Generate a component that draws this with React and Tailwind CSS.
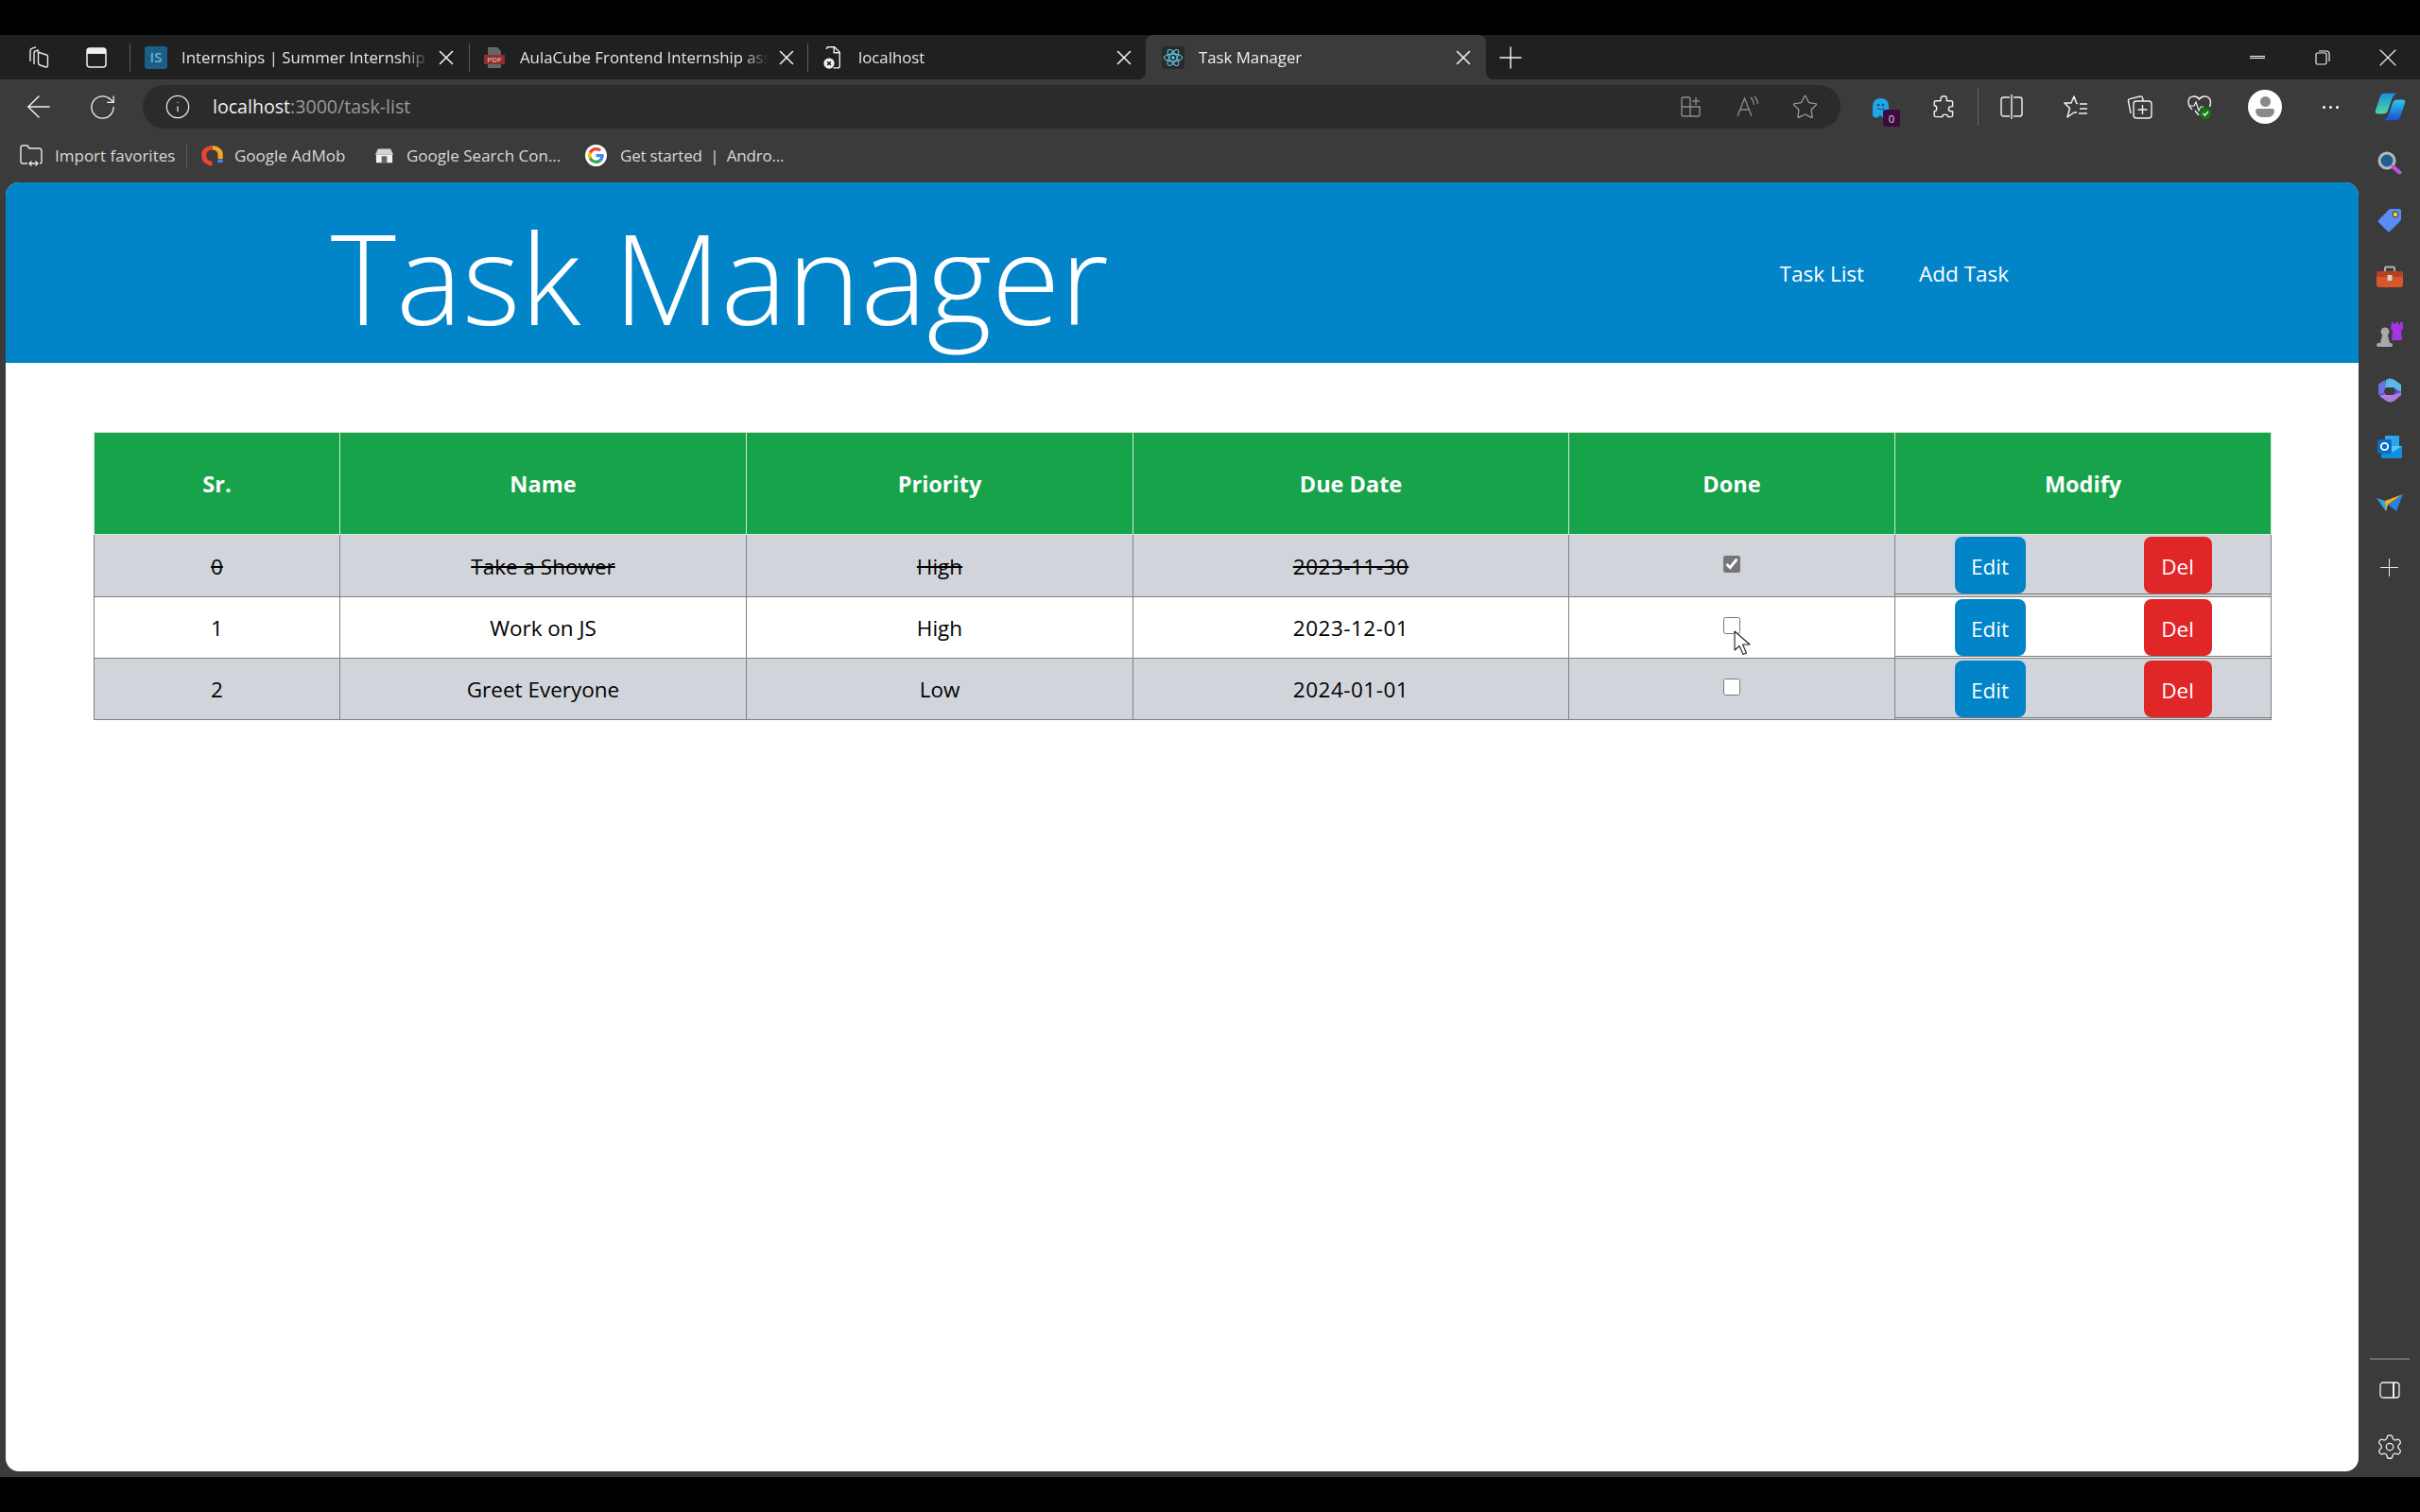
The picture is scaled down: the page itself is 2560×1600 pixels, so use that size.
import { ArrowLeft, RotateCw, Info, X, Plus, Star, Settings } from 'lucide-react'

const tasks = [
  { id: 0, name: 'Take a Shower', priority: 'High', due: '2023-11-30', done: true },
  { id: 1, name: 'Work on JS', priority: 'High', due: '2023-12-01', done: false },
  { id: 2, name: 'Greet Everyone', priority: 'Low', due: '2024-01-01', done: false },
]

function Slot({ className, children }) {
  return <div className={`flex shrink-0 items-center justify-center ${className}`}>{children}</div>
}

function TabText({ children, className = '' }) {
  return (
    <div className={`overflow-hidden whitespace-nowrap text-[16.800px] leading-6 text-[#e6e6e6] [mask-image:linear-gradient(to_right,black_90%,transparent)] ${className}`}>
      {children}
    </div>
  )
}

function TabClose({ className }) {
  return (
    <Slot className={className}>
      <X size={26} strokeWidth={1.400} color="#f2f2f2" />
    </Slot>
  )
}

function Divider() {
  return <div className="h-[30px] w-px shrink-0 bg-[#5a5a5a]" />
}

function WorkspacesIcon() {
  return (
    <svg width="25" height="24" viewBox="0 0 25 24" fill="none" stroke="#e8e8e8" strokeWidth="1.400" strokeLinejoin="round">
      <path d="M13 6l9 3q1.500.5 1.500 2v9q0 2.500-2 2l-6-2q-2-.7-2-2.500V7.500q0-1.800-.5-1.500z" />
      <path d="M9 19V7q0-2 2-2.300l3-.7" />
      <path d="M5 16V5q0-2.300 2-2.800L11 1" />
    </svg>
  )
}

function TabActionsIcon() {
  return (
    <svg width="22" height="22" viewBox="0 0 22 22" fill="none">
      <rect x="1" y="1" width="20" height="20" rx="3" stroke="#f0f0f0" strokeWidth="1.500" />
      <path d="M1 4q0-3 3-3h14q3 0 3 3v3H1z" fill="#f0f0f0" />
    </svg>
  )
}

function PdfIcon() {
  return (
    <svg width="22" height="22" viewBox="0 0 22 22">
      <path d="M4 0h10l4 4v18H4z" fill="#666" />
      <rect x="0" y="8" width="22" height="10" fill="#8f2f30" />
      <text x="11" y="16" textAnchor="middle" fontSize="7.500" fontWeight="700" fill="#d9a0a0" fontFamily="Liberation Sans, sans-serif">PDF</text>
    </svg>
  )
}

function FileErrorIcon() {
  return (
    <svg width="21" height="26" viewBox="0 0 24 30" fill="none">
      <path d="M5 4.500q0-2.500 2.500-2.500h7l6.500 6.500V25q0 2.500-2.500 2.500H13" stroke="#eee" strokeWidth="1.600" />
      <path d="M14 2v7h7" stroke="#eee" strokeWidth="1.600" />
      <circle cx="8" cy="22" r="6.500" fill="#f0f0f0" />
      <path d="M5.800 19.800l4.400 4.400M10.200 19.800l-4.400 4.400" stroke="#111" strokeWidth="1.600" />
    </svg>
  )
}

function ReactIcon() {
  return (
    <div className="flex h-[24px] w-[24px] items-center justify-center rounded-[3px] bg-[#2a2a2a]">
      <svg width="22" height="22" viewBox="-12 -12 24 24" fill="none" stroke="#5ec6e4" strokeWidth="1.200">
        <ellipse rx="10.500" ry="4.200" />
        <ellipse rx="10.500" ry="4.200" transform="rotate(60)" />
        <ellipse rx="10.500" ry="4.200" transform="rotate(120)" />
        <circle r="2" fill="#5ec6e4" stroke="none" />
      </svg>
    </div>
  )
}

function TabStrip() {
  return (
    <div className="flex h-[47px] bg-[#3b3b3b]">
      <div className="flex w-[1212px] shrink-0 items-center rounded-br-[8px] bg-[#202020]">
        <Slot className="w-[78px]"><WorkspacesIcon /></Slot>
        <Slot className="w-[48px]"><TabActionsIcon /></Slot>
        <div className="ml-[11px]"><Divider /></div>
        <div className="ml-[15px] flex h-[24px] w-[24px] items-center justify-center rounded-[3px] bg-[#1b5f87] text-[15px] font-semibold text-[#6fb0d6]">IS</div>
        <TabText className="ml-[15px] w-[262px]">Internships | Summer Internship 2</TabText>
        <TabClose className="w-[36px]" />
        <div className="ml-[6px]"><Divider /></div>
        <div className="ml-[15px] flex"><PdfIcon /></div>
        <TabText className="ml-[16px] w-[263px]">AulaCube Frontend Internship assignment</TabText>
        <TabClose className="w-[37px]" />
        <div className="ml-[4px]"><Divider /></div>
        <div className="ml-[15px] flex"><FileErrorIcon /></div>
        <TabText className="ml-[17px] w-[263px]">localhost</TabText>
        <TabClose className="w-[36px]" />
      </div>
      <div className="w-[360px] shrink-0 bg-[#202020]">
        <div className="flex h-full items-center rounded-t-[8px] bg-[#3b3b3b] pl-[17px]">
          <ReactIcon />
          <TabText className="ml-[15px] w-[262px] text-[#f0f0f0]">Task Manager</TabText>
          <TabClose className="w-[36px]" />
        </div>
      </div>
      <div className="flex flex-1 items-center rounded-bl-[8px] bg-[#202020]">
        <Slot className="w-[52px]"><Plus size={38} strokeWidth={0.900} color="#f2f2f2" /></Slot>
        <div className="ml-auto flex">
          <Slot className="w-[69px]"><div className="h-[3px] w-[16px] border-y border-white" /></Slot>
          <Slot className="w-[69px]">
            <svg width="16" height="16" viewBox="0 0 16 16" fill="none" stroke="#eee" strokeWidth="1.200">
              <rect x="1" y="3" width="11" height="12" rx="1.500" />
              <path d="M4 1h8q3 0 3 3v8" />
            </svg>
          </Slot>
          <Slot className="w-[69px]"><X size={32} strokeWidth={0.800} color="#f2f2f2" /></Slot>
        </div>
      </div>
    </div>
  )
}

function AddressBar() {
  return (
    <div className="ml-[9px] flex h-[46px] w-[1796px] shrink-0 items-center rounded-full bg-[#2b2b2b] pl-[23px] pr-[8px]">
      <Info size={28} strokeWidth={1.100} color="#e8e8e8" />
      <div className="ml-[23px] whitespace-nowrap text-[19.600px] text-[#f2f2f2]">
        localhost<span className="text-[#9a9a9a]">:3000/task-list</span>
      </div>
      <div className="ml-auto flex">
        <Slot className="w-[60px]">
          <svg width="22" height="22" viewBox="0 0 22 22" fill="none" stroke="#8c8c8c" strokeWidth="1.400">
            <path d="M10 5V2.500q0-1.500-1.500-1.500h-6Q1 1 1 2.500V11h9zM1 11v8.500Q1 21 2.500 21h6q1.500 0 1.500-1.500V11h10v8.500q0 1.500-1.500 1.500H10" />
            <path d="M16 1v8M12 5h8" />
          </svg>
        </Slot>
        <Slot className="w-[60px]">
          <svg width="24" height="22" viewBox="0 0 24 22" fill="none" stroke="#8c8c8c" strokeWidth="1.300">
            <path d="M1 21L8.500 2 16 21M4 14h9" />
            <path d="M15 1q3 3 3.500 8M19 0q3 3 3.500 8" />
          </svg>
        </Slot>
        <Slot className="w-[60px]"><Star size={29} strokeWidth={1} color="#a0a0a0" /></Slot>
      </div>
    </div>
  )
}

function GhostIcon() {
  return (
    <div className="relative h-[40px] w-[40px]">
      <svg className="absolute left-[12px] top-[10px]" width="19" height="22" viewBox="0 0 19 22">
        <path d="M1 10Q1 1 9.500 1T18 10v11l-3-2-3 2.500-3-2.500-4 3-4-2z" fill="#1ea7e8" />
        <circle cx="7" cy="8" r="1.300" fill="#0c4a6e" />
        <circle cx="12" cy="8" r="1.300" fill="#0c4a6e" />
        <path d="M6 11.500q3.500 3 7 0" stroke="#0c4a6e" strokeWidth="1" fill="none" />
      </svg>
      <div className="absolute left-[24px] top-[23px] flex h-[18px] w-[18px] items-center justify-center rounded-[2px] bg-[#3c0a3e] text-[11px] leading-none text-[#e8d8e8]">0</div>
    </div>
  )
}

function CopilotIcon() {
  return (
    <svg width="35" height="32" viewBox="0 0 36 52" preserveAspectRatio="none">
      <defs>
        <linearGradient id="copA" x1="0" y1="0" x2="0" y2="1">
          <stop offset="0" stopColor="#1a8fe0" />
          <stop offset="1" stopColor="#4fd8a0" />
        </linearGradient>
        <linearGradient id="copB" x1="0" y1="0" x2="0" y2="1">
          <stop offset="0" stopColor="#2dc8e8" />
          <stop offset="1" stopColor="#1c4fd6" />
        </linearGradient>
      </defs>
      <path d="M12 3h14q-4 1-6 9l-5 22q-1 4-5 4H5q-4 0-3-6L7 9q1-6 5-6z" fill="url(#copA)" />
      <path d="M24 49H10q4-1 6-9l5-22q1-4 5-4h5q4 0 3 6l-5 23q-1 6-5 6z" fill="url(#copB)" />
    </svg>
  )
}

function Toolbar() {
  return (
    <div className="flex h-[52px] items-start bg-[#3b3b3b] pt-[6px]">
      <div className="flex h-[46px] items-center pl-[8px]">
        <Slot className="w-[66px]"><ArrowLeft size={38} strokeWidth={0.900} color="#f2f2f2" /></Slot>
        <Slot className="w-[68px]"><RotateCw size={31} strokeWidth={1} color="#f2f2f2" /></Slot>
        <AddressBar />
        <Slot className="ml-[11px] w-[60px]"><GhostIcon /></Slot>
        <Slot className="w-[74px]">
          <svg width="23" height="27" viewBox="0 0 26 32" fill="none" stroke="#f2f2f2" strokeWidth="1.700" strokeLinejoin="round">
            <path d="M10 6q0-4 4-4t3.500 4v2H23q2 0 2 2v5h-2q-3 0-3 3t3 3h2v5q0 2-2 2h-4q0-3-3.500-3T12 28H4q-2 0-2-2v-5q3 0 3-3.500T2 14v-4q0-2 2-2h6z" />
          </svg>
        </Slot>
        <div className="h-[40px] w-px shrink-0 bg-[#666]" />
        <Slot className="w-[70px]">
          <svg width="24" height="26" viewBox="0 0 24 26" fill="none" stroke="#f2f2f2" strokeWidth="1.400">
            <rect x="1" y="3" width="22" height="20" rx="2.500" />
            <path d="M12 0v26" stroke="#3b3b3b" strokeWidth="4" />
            <path d="M12 0v26" />
          </svg>
        </Slot>
        <Slot className="w-[66px]">
          <svg width="26" height="24" viewBox="0 0 26 24" fill="none" stroke="#f2f2f2" strokeWidth="1.500" strokeLinejoin="round">
            <path d="M15 9l-1.500-1L11 1 8 8H1l5.500 5.500L4 23l7-5h3" />
            <path d="M17 9h8M17 14h8M16 19h9" />
          </svg>
        </Slot>
        <Slot className="w-[68px]">
          <svg width="27" height="25" viewBox="0 0 27 25" fill="none" stroke="#f2f2f2" strokeWidth="1.400">
            <path d="M4 19L1.500 6q-.4-2 1.600-2.400L14 1q2-.3 2.500 1.500l.8 3.500" />
            <rect x="7" y="6" width="19" height="18" rx="3" />
            <path d="M16.500 10v10M11.500 15h10" />
          </svg>
        </Slot>
        <Slot className="w-[60px]">
          <svg width="26" height="25" viewBox="0 0 26 25" fill="none">
            <path d="M5 15Q1 11 1 7q0-6 6-6 3.500 0 5.500 3 2-3 5.500-3 6 0 6.500 6 .2 2.500-1 5" stroke="#f2f2f2" strokeWidth="1.400" />
            <path d="M1.500 11H7l2-4 3 9 2-4h3" stroke="#f2f2f2" strokeWidth="1.200" />
            <path d="M8 16l4 5" stroke="#f2f2f2" strokeWidth="1.400" />
            <circle cx="19" cy="19" r="6" fill="#107c10" />
            <path d="M16.500 19l2 2 3.500-4" stroke="#fff" strokeWidth="1.200" />
          </svg>
        </Slot>
        <Slot className="w-[78px]">
          <div className="flex h-[36px] w-[36px] flex-col items-center justify-center overflow-hidden rounded-full bg-white">
            <div className="h-[11px] w-[11px] rounded-full bg-[#8a8a8a]" />
            <div className="mt-[2px] h-[9px] w-[20px] rounded-b-[10px] rounded-t-[4px] bg-[#8a8a8a]" />
          </div>
        </Slot>
        <Slot className="w-[60px] gap-[4px]">
          <div className="h-[3px] w-[3px] rounded-full bg-white" />
          <div className="h-[3px] w-[3px] rounded-full bg-white" />
          <div className="h-[3px] w-[3px] rounded-full bg-white" />
        </Slot>
        <Slot className="w-[66px]"><CopilotIcon /></Slot>
      </div>
    </div>
  )
}

function ImportIcon() {
  return (
    <svg width="25" height="24" viewBox="0 0 25 24" fill="none" stroke="#e8e8e8" strokeWidth="1.400">
      <path d="M8 20H3q-2 0-2-2V3q0-2 2-2h5l2 3h10q3 0 3 3v11q0 2-2 2" />
      <path d="M10 20h9M12.500 17.500L10 20l2.500 2.500M16.500 17.500L19 20l-2.500 2.500" />
    </svg>
  )
}

function AdmobIcon() {
  return (
    <svg width="23" height="24" viewBox="0 0 24 30" preserveAspectRatio="none" fill="none" strokeWidth="5.500">
      <path d="M12 4a9 9 0 0 1 9 9v6" stroke="#f5a623" />
      <path d="M12 4a9 9 0 0 0-9 9v3a9 9 0 0 0 9 9" stroke="#ea4335" />
      <path d="M21 20v4" stroke="#4285f4" />
    </svg>
  )
}

function ConsoleIcon() {
  return (
    <svg width="21" height="17" viewBox="0 0 22 22" preserveAspectRatio="none">
      <path d="M4 2h14l3 8H1z" fill="#cfd4da" />
      <rect x="2" y="10" width="18" height="11" fill="#eef0f2" />
      <rect x="8" y="12" width="6" height="9" fill="#5f6368" />
    </svg>
  )
}

function GoogleIcon() {
  return (
    <div className="flex h-[23px] w-[23px] items-center justify-center rounded-full bg-white">
      <svg width="17" height="17" viewBox="0 0 48 48">
        <path d="M24 9.500c3.500 0 6.700 1.300 9.100 3.500l6.800-6.800C35.800 2.400 30.200 0 24 0 14.600 0 6.500 5.400 2.600 13.200l7.900 6.100C12.400 13.700 17.700 9.500 24 9.500z" fill="#ea4335" />
        <path d="M47 24.500c0-1.600-.1-3.100-.4-4.500H24v9h13c-.6 3-2.200 5.500-4.800 7.200l7.700 6C44.300 38 47 31.800 47 24.500z" fill="#4285f4" />
        <path d="M10.500 28.700c-.5-1.500-.8-3-.8-4.700s.3-3.200.8-4.700l-7.900-6.100C1 16.400 0 20.100 0 24s1 7.600 2.600 10.800z" fill="#fbbc05" />
        <path d="M24 48c6.500 0 11.900-2.100 15.900-5.800l-7.700-6c-2.200 1.500-4.900 2.300-8.200 2.300-6.300 0-11.600-4.200-13.500-9.800l-7.900 6.100C6.500 42.600 14.600 48 24 48z" fill="#34a853" />
      </svg>
    </div>
  )
}

function BookmarkText({ children, className }) {
  return <div className={`whitespace-nowrap text-[17px] text-[#d8d8d8] ${className}`}>{children}</div>
}

function Bookmarks() {
  return (
    <div className="flex h-[57px] items-center pl-[21px]">
      <ImportIcon />
      <BookmarkText className="ml-[12px] w-[126px]">Import favorites</BookmarkText>
      <div className="ml-[13px] h-[28px] w-px bg-[#5a5a5a]" />
      <div className="ml-[15px] flex"><AdmobIcon /></div>
      <BookmarkText className="ml-[12px] w-[121px]">Google AdMob</BookmarkText>
      <div className="ml-[27px] flex"><ConsoleIcon /></div>
      <BookmarkText className="ml-[13px] w-[165px]">Google Search Con...</BookmarkText>
      <div className="ml-[24px] flex"><GoogleIcon /></div>
      <BookmarkText className="ml-[14px] tracking-[-0.2px]">Get started&nbsp; |&nbsp; Andro...</BookmarkText>
    </div>
  )
}

function SideIcon({ children }) {
  return <div className="flex h-[60px] w-full items-center justify-center">{children}</div>
}

function Sidebar() {
  return (
    <div className="flex w-[65px] shrink-0 flex-col items-center bg-[#3b3b3b] pb-[17px] pt-[7px]">
      <SideIcon>
        <svg width="26" height="26" viewBox="0 0 26 26" fill="none">
          <circle cx="10" cy="10" r="8" fill="#1c5f8a" stroke="#b8b8b8" strokeWidth="3" />
          <path d="M16.500 16.500l7 6" stroke="#c74fe0" strokeWidth="4" strokeLinecap="round" />
        </svg>
      </SideIcon>
      <SideIcon>
        <svg width="26" height="26" viewBox="0 0 26 26">
          <path d="M14 1h9q2 0 2 2v9q0 1-1 2L13 25q-1 1-2 0L1 15q-1-1 0-2L12 2q1-1 2-1z" fill="#5a8cf8" />
          <circle cx="19" cy="7" r="3" fill="#f5d020" stroke="#333" strokeWidth="1" />
        </svg>
      </SideIcon>
      <SideIcon>
        <svg width="28" height="24" viewBox="0 0 28 24" fill="none">
          <path d="M9 6V3q0-1.500 1.500-1.500h7Q19 1.500 19 3v3" stroke="#b0b0b0" strokeWidth="2" />
          <rect x="0" y="6" width="28" height="17" rx="3" fill="#d8562c" />
          <rect x="0" y="6" width="28" height="6" rx="2" fill="#b8401e" />
          <rect x="11.500" y="10" width="5" height="6" fill="#d0d0d0" />
        </svg>
      </SideIcon>
      <SideIcon>
        <svg width="28" height="30" viewBox="0 0 28 30">
          <path d="M16 3h2v2h2V3h3v2h2V3h3v7l-2 2 1 10h-11l1-10-2-2z" fill="#a336e0" />
          <circle cx="9" cy="13" r="4.500" fill="#a8a8a8" />
          <path d="M6 17h6l2 8H4z" fill="#a8a8a8" />
          <rect x="0" y="25" width="17" height="4" rx="2" fill="#a8a8a8" />
        </svg>
      </SideIcon>
      <SideIcon>
        <svg width="26" height="28" viewBox="0 0 26 28" fill="none">
          <path d="M8 5q5-5 10 0l6 4v10l-6 4q-5 4-10 1l-6-5V9z" fill="#5a4fc8" />
          <path d="M9 3q4-3 9 0l7 5v8l-8-5H8z" fill="#5bb8e8" />
          <path d="M1 9q0-2 2-3l5-3v8L7 17l-6 2z" fill="#6f6fe0" />
          <path d="M25 16v3l-7 6q-5 3-9 0l-7-5 6-2 9 1z" fill="#b27be0" />
          <path d="M9 11h8l2 4-3 4H9l-2-4z" fill="#3b3b3b" />
        </svg>
      </SideIcon>
      <SideIcon>
        <svg width="26" height="26" viewBox="0 0 26 26">
          <rect x="8" y="1" width="15" height="12" fill="#28a8ea" />
          <path d="M4 12h22v12q0 1-1 1H5q-1 0-1-1z" fill="#0f8fdc" />
          <path d="M4 12l11 7 11-7" fill="#50c8f5" />
          <rect x="0" y="5" width="15" height="15" rx="2" fill="#0a6cc2" />
          <circle cx="7.500" cy="12.500" r="3.700" fill="none" stroke="#fff" strokeWidth="1.800" />
        </svg>
      </SideIcon>
      <SideIcon>
        <svg width="28" height="20" viewBox="0 0 28 20">
          <path d="M0 4l12 4-2 10z" fill="#2ba4e8" />
          <path d="M28 0L9 7l1 11 2-7z" fill="#f5b021" />
          <path d="M28 0L12 11l9 7z" fill="#2a7fe0" />
        </svg>
      </SideIcon>
      <div className="mt-[7px]">
        <SideIcon><Plus size={31} strokeWidth={0.800} color="#e8e8e8" /></SideIcon>
      </div>
      <div className="mt-auto h-[2px] w-[42px] bg-[#6e6e6e]" />
      <div className="mt-[23px] flex h-[18px] items-center">
        <svg width="22" height="18" viewBox="0 0 22 18" fill="none" stroke="#f2f2f2" strokeWidth="1.300">
          <rect x="1" y="1" width="20" height="16" rx="3" />
          <path d="M15 1v16" strokeWidth="2" />
        </svg>
      </div>
      <div className="mt-[36px] flex">
        <Settings size={30} strokeWidth={1} color="#f2f2f2" />
      </div>
    </div>
  )
}

function Cursor() {
  return (
    <svg className="absolute left-[174px] top-[35px]" width="19" height="27" viewBox="0 0 19 27">
      <path d="M1 1v20l5-4.500 4 9 3.500-1.500-4-9H17z" fill="#fff" stroke="#222" strokeWidth="1.100" strokeLinejoin="round" />
    </svg>
  )
}

function TaskRow({ task, index }) {
  const rowBg = index % 2 === 0 ? 'bg-[#d1d5db]' : 'bg-white'
  const rowHeight = index === 0 ? 'h-[66px]' : 'h-[65px]'
  const strike = task.done ? 'line-through' : ''
  return (
    <tr className={`${rowHeight} ${rowBg}`}>
      <td className={`border border-[#808080] pt-[2px] text-center ${strike}`}>{task.id}</td>
      <td className={`border border-[#808080] pt-[2px] text-center ${strike}`}>{task.name}</td>
      <td className={`border border-[#808080] pt-[2px] text-center ${strike}`}>{task.priority}</td>
      <td className={`border border-[#808080] pt-[2px] text-center tracking-[0.500px] ${strike}`}>{task.due}</td>
      <td className="relative border border-[#808080] text-center">
        <input
          type="checkbox"
          readOnly
          checked={task.done}
          className="relative top-[-1px] h-[18px] w-[18px] accent-[#767676]"
        />
        {index === 1 && <Cursor />}
      </td>
      <td className="border border-[#808080] p-0 align-top">
        <div className="flex h-[63px] items-start justify-around border-b border-[#777] pt-[2px]">
          <button className="h-[60px] w-[75px] rounded-[8px] bg-[#0284c9] pt-[3px] text-white">Edit</button>
          <button className="h-[60px] w-[72px] rounded-[8px] bg-[#e02626] pt-[3px] text-white">Del</button>
        </div>
      </td>
    </tr>
  )
}

export default function App() {
  return (
    <div className="flex h-[1600px] w-[2560px] flex-col overflow-hidden bg-black font-['Open_Sans',sans-serif]">
      <div className="h-[37px] shrink-0" />
      <TabStrip />
      <Toolbar />
      <div className="flex h-[1427px] shrink-0 bg-[#3b3b3b]">
        <div className="flex w-[2495px] shrink-0 flex-col">
          <Bookmarks />
          <div className="ml-[6px] h-[1364px] overflow-hidden rounded-[14px] bg-white">
            <header className="flex h-[191px] items-center justify-around bg-[#0284c9] pl-[4px] text-white">
              <h1 className="whitespace-nowrap pt-[9px] text-[132px] font-light leading-none">Task Manager</h1>
              <nav className="flex gap-[58px] px-[30px] pt-[3px] text-[22.500px] leading-none">
                <span>Task List</span>
                <span>Add Task</span>
              </nav>
            </header>
            <div className="pl-[93px] pt-[73px]">
              <table className="w-[2303px] table-fixed border-collapse text-[22.500px] text-black">
                <colgroup>
                  <col className="w-[260px]" />
                  <col className="w-[430px]" />
                  <col className="w-[409px]" />
                  <col className="w-[461px]" />
                  <col className="w-[345px]" />
                  <col className="w-[398px]" />
                </colgroup>
                <thead>
                  <tr className="h-[108px] bg-[#16a34a] text-white">
                    {['Sr.', 'Name', 'Priority', 'Due Date', 'Done', 'Modify'].map((label) => (
                      <th key={label} className="border border-[#d5e8da] pt-[2px] text-[23.500px] font-bold">{label}</th>
                    ))}
                  </tr>
                </thead>
                <tbody>
                  {tasks.map((task, index) => (
                    <TaskRow key={task.id} task={task} index={index} />
                  ))}
                </tbody>
              </table>
            </div>
          </div>
        </div>
        <Sidebar />
      </div>
      <div className="flex-1" />
    </div>
  )
}
